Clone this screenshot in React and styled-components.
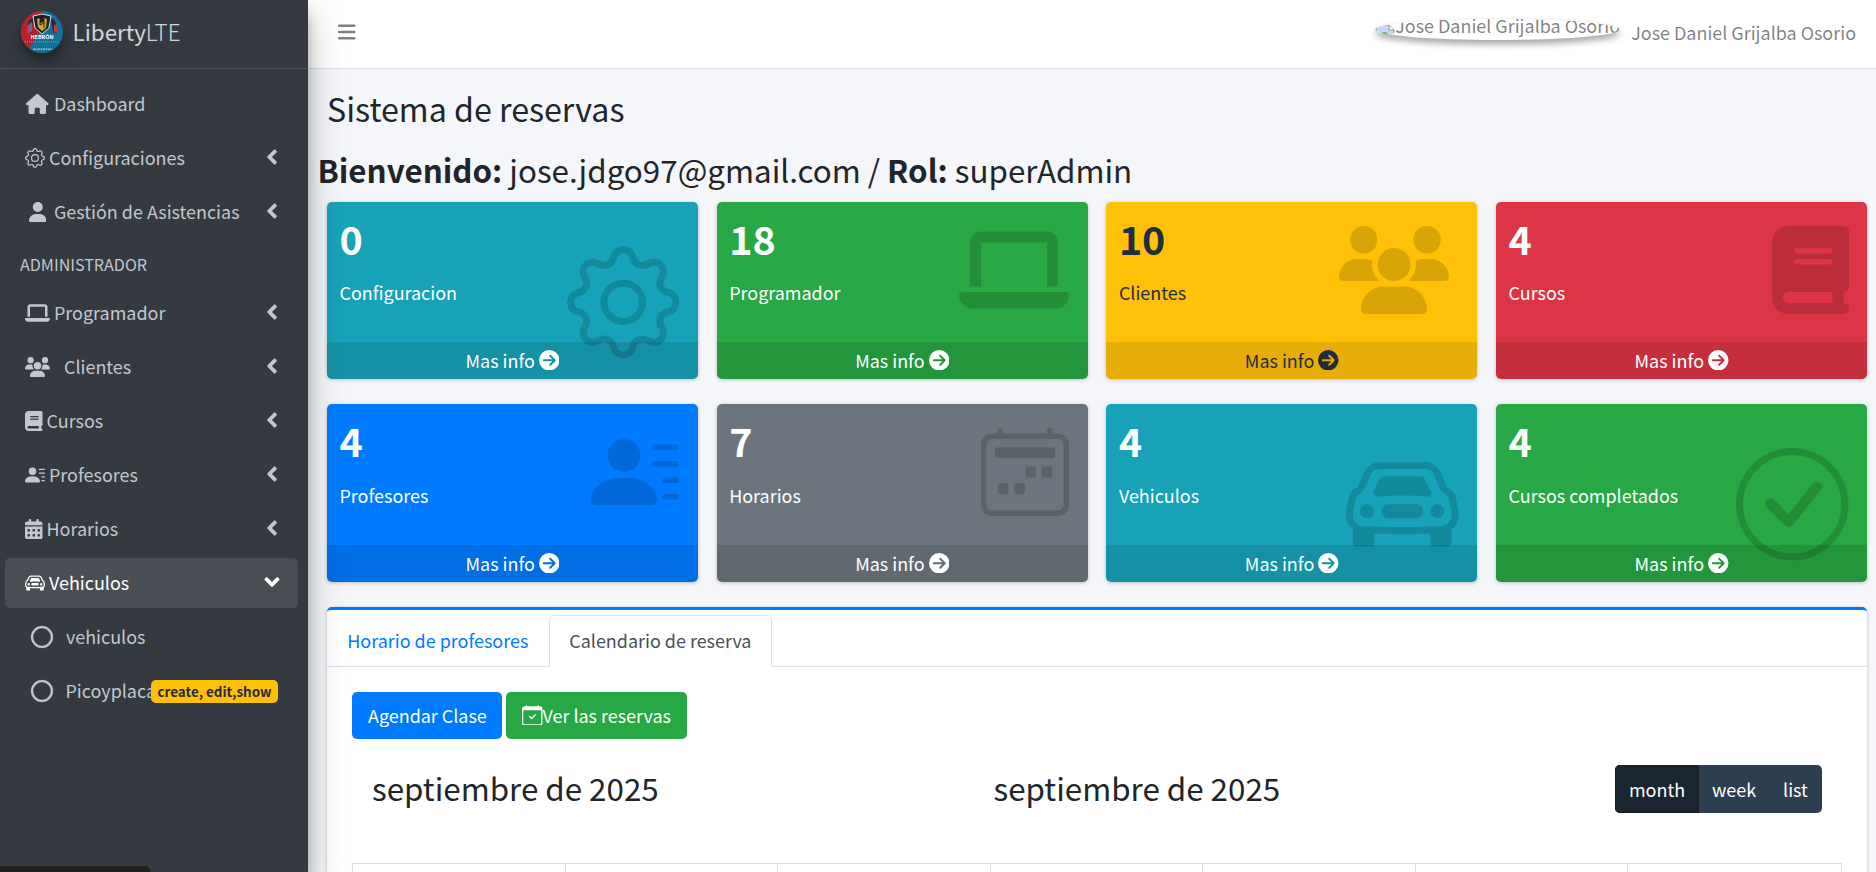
import React from 'react';
import styled, { createGlobalStyle, css } from 'styled-components';
import { FaAngleLeft } from 'react-icons/fa';
import {
  FaHouse, FaUser, FaLaptop, FaUsers, FaBook, FaCalendarDays,
  FaRegCircle, FaBars, FaCircleArrowRight,
} from 'react-icons/fa6';
import {
  BsGear, BsPersonLinesFill, BsCarFront, BsCalendar2Week, BsCheckCircle, BsCalendarCheck,
} from 'react-icons/bs';

const GlobalStyle = createGlobalStyle`
  *, *::before, *::after { box-sizing: border-box; }
  html, body { margin: 0; padding: 0; overflow: hidden; }
  body {
    font-family: "Noto Sans CJK SC", "Noto Sans", sans-serif;
    font-size: 17.95px;
    line-height: 30px;
    color: #212529;
    background: #f4f6f9;
  }
  h1, h2, h3, p { margin: 0; font-weight: 400; }
  a { color: inherit; text-decoration: none; }
  svg { display: block; flex: none; }
`;

const Shell = styled.div`
  position: relative;
  display: flex;
  width: 1876px;
  height: 872px;
  overflow: hidden;
`;

/* ---------- sidebar ---------- */
const Sidebar = styled.aside`
  position: relative;
  z-index: 2;
  flex: none;
  width: 308px;
  height: 872px;
  background: #343a40;
  color: #c2c7d0;
  box-shadow: 0 17px 35px rgba(0, 0, 0, 0.25), 0 12px 12px rgba(0, 0, 0, 0.22);
`;

const Brand = styled.a`
  display: flex;
  align-items: center;
  height: 69px;
  padding: 0 0 5px 21px;
  border-bottom: 1px solid #4b545c;
  color: rgba(255, 255, 255, 0.8);
  font-size: 22.4px;
`;

const BrandLogo = styled.svg`
  width: 42px;
  height: 42px;
  border-radius: 50%;
  box-shadow: 0 12px 25px rgba(0, 0, 0, 0.19), 0 7px 7px rgba(0, 0, 0, 0.23);
`;

const BrandText = styled.span`
  margin: 0 0 2px 9.5px;
  white-space: nowrap;
`;

const Thin = styled.span`
  font-weight: 200;
`;

const Nav = styled.nav`
  display: flex;
  flex-direction: column;
  gap: 4px;
  padding: 10px 10px 0 5px;
`;

const NavLink = styled.a`
  position: relative;
  display: flex;
  align-items: center;
  height: 50px;
  padding: 0 0 1px 20px;
  border-radius: 5px;
  white-space: nowrap;
  ${(p) => p.$active && css`
    background: rgba(255, 255, 255, 0.1);
    color: #fff;
  `}
`;

const NavLabel = styled.span`
  margin-bottom: 2px;
`;

const NavHeader = styled.div`
  height: 43px;
  padding: 8px 0 0 15px;
  font-size: 16.1px;
  line-height: 30px;
`;

const IconSlot = styled.span`
  display: flex;
  justify-content: center;
  width: ${(p) => p.$slot}px;
  margin: 0 ${(p) => p.$gap}px 0 ${(p) => p.$indent || 0}px;
  svg { width: ${(p) => p.$w}px; height: ${(p) => p.$h || 20}px; }
`;

const Ring = styled(FaRegCircle)`
  overflow: visible;
  stroke: currentColor;
  stroke-width: 6px;
`;

const Chevron = styled(FaAngleLeft)`
  margin: 0 20px 2px auto;
  width: 12px;
  height: 24px;
  transform: rotate(${(p) => (p.$open ? '-90deg' : '0deg')});
`;

const PermBadge = styled.span`
  position: absolute;
  right: 20px;
  top: 14px;
  width: 127px;
  height: 23px;
  border-radius: 5px;
  background: #ffc107;
  color: #1f2d3d;
  font-size: 13.4px;
  font-weight: 700;
  line-height: 22px;
  text-align: center;
`;

const StatusBubble = styled.div`
  position: absolute;
  z-index: 3;
  left: 0;
  bottom: 0;
  width: 150px;
  height: 6px;
  border-top-right-radius: 5px;
  background: #1f1f1f;
`;

/* ---------- top bar ---------- */
const Main = styled.div`
  flex: 1;
  min-width: 0;
  display: flex;
  flex-direction: column;
`;

const TopBar = styled.header`
  flex: none;
  display: flex;
  align-items: center;
  height: 69px;
  padding: 0 20px 4px 30px;
  border-bottom: 1px solid #dee2e6;
  background: #fff;
  color: rgba(0, 0, 0, 0.5);
`;

const Burger = styled(FaBars)`
  width: 17.5px;
  height: 20px;
`;

const UserLink = styled.a`
  display: flex;
  align-items: center;
  margin-left: auto;
  white-space: nowrap;
`;

const Avatar = styled.span`
  display: flex;
  align-items: flex-start;
  width: 245px;
  height: 21px;
  margin: 0 11px 5px 0;
  border-radius: 50%;
  overflow: hidden;
  line-height: 16px;
  box-shadow: 0 4px 7px rgba(0, 0, 0, 0.16), 0 4px 7px rgba(0, 0, 0, 0.23);
`;

const AltText = styled.span`
  margin-top: -2px;
`;

const BrokenImage = styled.svg`
  width: 20px;
  height: 20px;
  margin: 5px 0 0 0;
`;

/* ---------- content ---------- */
const Content = styled.main`
  padding: 0 9px 0 19px;
`;

const PageTitle = styled.h1`
  height: 80px;
  padding-top: 12px;
  font-size: 32.2px;
  line-height: 54px;
`;

const Welcome = styled.h2`
  height: 53px;
  margin-left: -9.5px;
  font-size: 31.35px;
  line-height: 42px;
`;

const Boxes = styled.section`
  display: grid;
  grid-template-columns: repeat(4, 1fr);
  grid-template-rows: 177px 178px;
  gap: 25px 18.75px;
  margin-bottom: 25px;
`;

const Box = styled.article`
  position: relative;
  display: flex;
  flex-direction: column;
  border-radius: 5px;
  overflow: hidden;
  background: ${(p) => p.$bg};
  color: ${(p) => p.$fg};
`;

const BoxWrap = styled.div`
  display: grid;
  border-radius: 5px;
  box-shadow: 0 0 1px rgba(0, 0, 0, 0.125), 0 1px 4px rgba(0, 0, 0, 0.2);
`;

const BoxBody = styled.div`
  flex: 1;
  display: flex;
  flex-direction: column;
  justify-content: space-between;
  padding: 9px 12.5px 35px;
`;

const BoxCount = styled.h3`
  font-size: 39.4px;
  font-weight: 700;
  line-height: 53px;
`;

const BoxLabel = styled.p`
  line-height: 30px;
`;

const BoxIcon = styled.div`
  position: absolute;
  top: ${(p) => p.$top}px;
  right: ${(p) => p.$right}px;
  color: rgba(0, 0, 0, 0.15);
  svg { width: ${(p) => p.$w}px; height: ${(p) => p.$h}px; }
`;

const BoxFooter = styled.a`
  position: relative;
  display: flex;
  justify-content: center;
  align-items: center;
  gap: 4px;
  height: 37px;
  padding-bottom: 1px;
  background: rgba(0, 0, 0, 0.1);
  svg { width: 20.5px; height: 20.5px; }
`;

const Panel = styled.section`
  height: 300px;
  border-top: 3px solid #007bff;
  border-radius: 5px;
  background: #fff;
  box-shadow: 0 0 1px rgba(0, 0, 0, 0.125), 0 1px 4px rgba(0, 0, 0, 0.2);
`;

const Tabs = styled.div`
  display: flex;
  height: 57px;
  padding-top: 5px;
  border-bottom: 1px solid #dee2e6;
`;

const Tab = styled.a`
  height: 52px;
  padding: 9px 19.3px;
  border: 1px solid transparent;
  border-radius: 5px 5px 0 0;
  color: #007bff;
  width: ${(p) => p.$width}px;
  white-space: nowrap;
  ${(p) => p.$active && css`
    border-color: #dee2e6 #dee2e6 #fff;
    background: #fff;
    color: #495057;
  `}
`;

const PanelBody = styled.div`
  padding: 25px;
`;

const Actions = styled.div`
  display: flex;
  gap: 4px;
`;

const Button = styled.button`
  display: flex;
  align-items: center;
  width: ${(p) => p.$width}px;
  height: 47px;
  padding: 0 0 1px 16px;
  border: 0;
  border-radius: 5px;
  background: ${(p) => p.$bg};
  color: #fff;
  font: inherit;
  white-space: nowrap;
  svg { width: 20.5px; height: 20.5px; }
`;

const CalendarBar = styled.div`
  display: flex;
  align-items: center;
  justify-content: space-between;
  height: 48px;
  margin: 26px 20px 50px 20px;
`;

const MonthTitle = styled.h2`
  padding-bottom: 2px;
  font-size: 31.35px;
  line-height: 42px;
  white-space: nowrap;
`;

const ViewSwitch = styled.div`
  display: flex;
  width: 207px;
  height: 48px;
  border-radius: 5px;
  overflow: hidden;
  background: #2c3e50;
  color: #fff;
`;

const ViewOption = styled.button`
  width: ${(p) => p.$width}px;
  padding: 0;
  border: 0;
  background: ${(p) => (p.$active ? '#1a252f' : 'transparent')};
  box-shadow: ${(p) => (p.$active ? 'inset 0 0 0 1px #151e27' : 'none')};
  color: inherit;
  font: inherit;
`;

const CalendarGrid = styled.div`
  display: grid;
  grid-template-columns: repeat(7, 1fr);
  height: 60px;
  border: 1px solid #ddd;
`;

const DayColumn = styled.div`
  &:not(:last-child) { border-right: 1px solid #ddd; }
`;

function Logo() {
  return (
    <BrandLogo viewBox="0 0 42 42">
      <rect width="42" height="42" fill="#12719b" />
      <path d="M0 0H21L22 12L17 24L8 37L0 42Z" fill="#b8202c" />
      <path d="M7 22V13Q8 7 14 7L15 9Q10 11 10 22ZM35 22V13Q34 7 28 7L27 9Q32 11 32 22Z" fill="#26292e" />
      <path d="M6 22V15L9 13V23ZM33 22V13L36 15V21Z" fill="#d5303b" />
      <path d="M8 13L11 11V20L8 22Z" fill="#2188ae" />
      <path d="M12 5L21 3L30 5L28 17L21 23L14 17Z" fill="#1c2229" stroke="#dbe0df" strokeWidth="1" />
      <path d="M16 8L19 7V12L23 11V7L26 8L25 17L21 20L17 16Z" fill="#d7a637" />
      <path d="M19 7V14M23 7V17M19 14L23 12" stroke="#2c261b" strokeWidth="1" />
      <text x="21" y="28.4" textAnchor="middle" fontSize="5.4" fontWeight="700" fill="#fff">HEBRÓN</text>
      <path d="M4 30.8H38" stroke="#d6b4bd" strokeWidth="1" strokeDasharray="1 1" opacity=".7" />
      <path d="M12 38.2H31" stroke="#d5e7ef" strokeWidth="1.2" strokeDasharray="2 .5" opacity=".75" />
    </BrandLogo>
  );
}

const menu = [
  { label: 'Dashboard', icon: FaHouse, w: 22.5, slot: 25, gap: 4, leaf: true },
  { label: 'Configuraciones', icon: BsGear, w: 20, slot: 20, gap: 4 },
  { label: 'Gestión de Asistencias', icon: FaUser, w: 17.5, slot: 25, gap: 4 },
  { header: 'ADMINISTRADOR' },
  { label: 'Programador', icon: FaLaptop, w: 25, slot: 25, gap: 4 },
  { label: 'Clientes', icon: FaUsers, w: 25, slot: 25, gap: 14 },
  { label: 'Cursos', icon: FaBook, w: 17.5, slot: 17.5, gap: 4 },
  { label: 'Profesores', icon: BsPersonLinesFill, w: 20, slot: 20, gap: 4 },
  { label: 'Horarios', icon: FaCalendarDays, w: 17.5, slot: 17.5, gap: 4 },
  { label: 'Vehiculos', icon: BsCarFront, w: 20, slot: 20, gap: 4, active: true },
  { label: 'vehiculos', icon: Ring, w: 22, h: 22, slot: 22.5, gap: 13, indent: 5.5, leaf: true },
  { label: 'Picoyplaca', icon: Ring, w: 22, h: 22, slot: 22.5, gap: 12.5, indent: 5.5, leaf: true, badge: 'create, edit,show' },
];

const WHITE = '#fff';
const DARK = '#1f2d3d';
const boxes = [
  { count: 0, label: 'Configuracion', bg: '#17a2b8', icon: BsGear, w: 112.5, h: 112.5, top: 44 },
  { count: 18, label: 'Programador', bg: '#28a745', icon: FaLaptop, w: 110, h: 88, top: 24 },
  { count: 10, label: 'Clientes', bg: '#ffc107', fg: DARK, icon: FaUsers, w: 110, h: 88, top: 24, right: 28 },
  { count: 4, label: 'Cursos', bg: '#dc3545', icon: FaBook, w: 77, h: 88, top: 24 },
  { count: 4, label: 'Profesores', bg: '#007bff', icon: BsPersonLinesFill, w: 88, h: 88, top: 24 },
  { count: 7, label: 'Horarios', bg: '#6c757d', icon: BsCalendar2Week, w: 88, h: 88, top: 24 },
  { count: 4, label: 'Vehiculos', bg: '#17a2b8', icon: BsCarFront, w: 112.5, h: 112.5, top: 44 },
  { count: 4, label: 'Cursos completados', bg: '#28a745', icon: BsCheckCircle, w: 112.5, h: 112.5, top: 44 },
];

function MenuEntry({ item }) {
  if (item.header) return <NavHeader>{item.header}</NavHeader>;
  const Icon = item.icon;
  return (
    <NavLink $active={item.active}>
      <IconSlot $slot={item.slot} $gap={item.gap} $indent={item.indent} $w={item.w} $h={item.h}>
        <Icon />
      </IconSlot>
      <NavLabel>{item.label}</NavLabel>
      {!item.leaf && <Chevron $open={item.active} />}
      {item.badge && <PermBadge>{item.badge}</PermBadge>}
    </NavLink>
  );
}

function InfoBox({ box }) {
  const Icon = box.icon;
  return (
    <BoxWrap>
      <Box $bg={box.bg} $fg={box.fg || WHITE}>
        <BoxBody>
          <BoxCount>{box.count}</BoxCount>
          <BoxLabel>{box.label}</BoxLabel>
        </BoxBody>
        <BoxIcon $top={box.top} $right={box.right || 18.5} $w={box.w} $h={box.h}>
          <Icon />
        </BoxIcon>
        <BoxFooter>
          Mas info <FaCircleArrowRight />
        </BoxFooter>
      </Box>
    </BoxWrap>
  );
}

export default function App() {
  return (
    <Shell>
      <GlobalStyle />
      <Sidebar>
        <Brand>
          <Logo />
          <BrandText>Liberty<Thin>LTE</Thin></BrandText>
        </Brand>
        <Nav>
          {menu.map((item) => <MenuEntry key={item.label || item.header} item={item} />)}
        </Nav>
      </Sidebar>
      <Main>
        <TopBar>
          <Burger />
          <UserLink>
            <Avatar>
              <BrokenImage viewBox="0 0 20 20">
                <path d="M1 1H14L19 6V19H1Z" fill="#c6d8f5" stroke="#9a9a9a" strokeWidth="1.2" />
                <path d="M14 1V6H19" fill="#fff" stroke="#9a9a9a" strokeWidth="1.2" />
                <path d="M2 14Q9 4 14 11L8 18H2Z" fill="#52b043" />
                <path d="M8 19L20 8V11L11 19Z" fill="#fff" />
              </BrokenImage>
              <AltText>Jose Daniel Grijalba Osorio</AltText>
            </Avatar>
            <span>Jose Daniel Grijalba Osorio</span>
          </UserLink>
        </TopBar>
        <Content>
          <PageTitle>Sistema de reservas</PageTitle>
          <Welcome>
            <b>Bienvenido:</b> jose.jdgo97@gmail.com / <b>Rol:</b> superAdmin
          </Welcome>
          <Boxes>
            {boxes.map((box) => <InfoBox key={box.label} box={box} />)}
          </Boxes>
          <Panel>
            <Tabs>
              <Tab $width={222}>Horario de profesores</Tab>
              <Tab $width={223} $active>Calendario de reserva</Tab>
            </Tabs>
            <PanelBody>
              <Actions>
                <Button $bg="#007bff" $width={150}>Agendar Clase</Button>
                <Button $bg="#28a745" $width={181}><BsCalendarCheck />Ver las reservas</Button>
              </Actions>
              <CalendarBar>
                <MonthTitle>septiembre de 2025</MonthTitle>
                <MonthTitle>septiembre de 2025</MonthTitle>
                <ViewSwitch>
                  <ViewOption $width={84} $active>month</ViewOption>
                  <ViewOption $width={70}>week</ViewOption>
                  <ViewOption $width={53}>list</ViewOption>
                </ViewSwitch>
              </CalendarBar>
              <CalendarGrid>
                {Array.from({ length: 7 }, (_, i) => <DayColumn key={i} />)}
              </CalendarGrid>
            </PanelBody>
          </Panel>
        </Content>
      </Main>
      <StatusBubble />
    </Shell>
  );
}
